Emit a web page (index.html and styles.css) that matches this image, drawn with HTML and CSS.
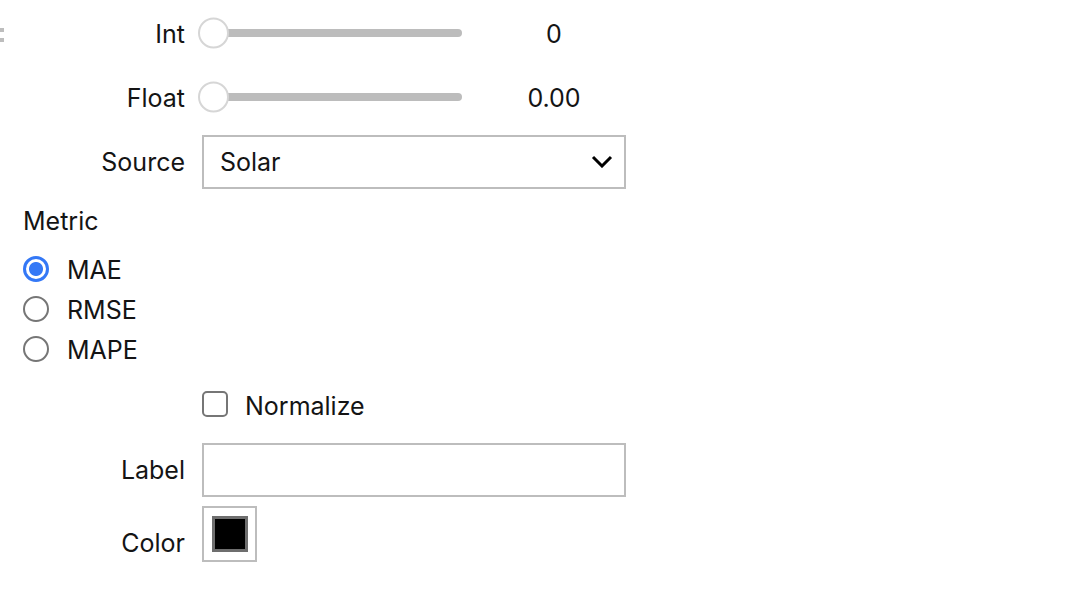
FILE: index.html
```html
<!DOCTYPE html>
<html>
<head>
<meta charset="utf-8">
<link rel="stylesheet" href="styles.css">
</head>
<body>
<div class="page">
  <div class="handle"><i></i><i></i></div>
  <div class="panel">
    <div class="row">
      <label class="lbl">Int</label>
      <div class="slider"><div class="track"><span class="thumb"></span></div></div>
      <div class="readout">0</div>
    </div>
    <div class="row">
      <label class="lbl">Float</label>
      <div class="slider"><div class="track"><span class="thumb"></span></div></div>
      <div class="readout">0.00</div>
    </div>
    <div class="row">
      <label class="lbl">Source</label>
      <div class="select">
        <span>Solar</span>
        <svg class="chev" width="22" height="14" viewBox="0 0 22 14"><polyline points="2,3 11,12 20,3" fill="none" stroke="#000" stroke-width="3"/></svg>
      </div>
    </div>
    <div class="metric">Metric</div>
    <div class="radios">
      <div class="radio"><span class="dot on"></span><span>MAE</span></div>
      <div class="radio"><span class="dot"></span><span>RMSE</span></div>
      <div class="radio"><span class="dot"></span><span>MAPE</span></div>
    </div>
    <div class="row check-row">
      <span class="spacer"></span>
      <span class="box"></span>
      <span>Normalize</span>
    </div>
    <div class="row">
      <label class="lbl">Label</label>
      <div class="text-input"></div>
    </div>
    <div class="row color-row">
      <label class="lbl">Color</label>
      <div class="swatch"><span></span></div>
    </div>
  </div>
</div>
</body>
</html>
```
FILE: styles.css
```css
body {
  margin: 0;
  background: #fff;
  font-family: Inter, "Noto Sans", sans-serif;
  font-size: 25px;
  color: #141414;
}
.page {
  display: flex;
}
.handle {
  width: 22px;
  padding-top: 28px;
  display: flex;
  flex-direction: column;
  gap: 6px;
}
.handle i {
  display: block;
  width: 4px;
  height: 4px;
  background: #bdbdbd;
}
.panel {
  padding-top: 7px;
}
.row {
  display: flex;
  align-items: center;
  height: 54px;
  margin-bottom: 10px;
}
.lbl {
  flex: none;
  width: 163px;
  padding-right: 17px;
  text-align: right;
}
.slider {
  width: 260px;
  height: 54px;
  display: flex;
  align-items: center;
}
.track {
  flex: 1;
  margin-left: 12px;
  margin-top: -2px;
  height: 8px;
  border-radius: 4px;
  background: #bcbcbc;
  position: relative;
}
.thumb {
  position: absolute;
  left: -16px;
  top: 50%;
  width: 31px;
  height: 31px;
  box-sizing: border-box;
  border: 2px solid #d6d6d6;
  border-radius: 50%;
  background: #fff;
  transform: translateY(-50%);
}
.readout {
  width: 184px;
  text-align: center;
}
.select {
  width: 424px;
  height: 54px;
  box-sizing: border-box;
  border: 2px solid #bdbdbd;
  display: flex;
  align-items: center;
  justify-content: space-between;
  padding: 0 11px 0 16px;
}
.chev {
  margin-top: -2px;
}
.metric {
  height: 44px;
  line-height: 44px;
  padding-left: 1px;
}
.radios {
  margin-top: 7px;
}
.radio {
  display: flex;
  align-items: center;
  height: 40px;
  padding-left: 1px;
}
.dot {
  width: 26px;
  height: 26px;
  box-sizing: border-box;
  border: 2px solid #767676;
  border-radius: 50%;
  margin-right: 18px;
  margin-top: -2px;
  background: #fff;
}
.dot.on {
  border: 3px solid #3478f6;
  background: radial-gradient(circle, #3478f6 0 6.5px, #fff 7.5px);
}
.check-row {
  margin-top: 8px;
  height: 55px;
}
.spacer {
  width: 180px;
}
.box {
  width: 26px;
  height: 26px;
  box-sizing: border-box;
  border: 2px solid #767676;
  border-radius: 5px;
  margin-right: 17px;
  margin-top: -4px;
}
.text-input {
  width: 424px;
  height: 54px;
  box-sizing: border-box;
  border: 2px solid #bdbdbd;
}
.color-row {
  height: 56px;
  margin-top: -1px;
  align-items: flex-end;
}
.color-row .lbl {
  padding-bottom: 4px;
}
.swatch {
  width: 55px;
  height: 56px;
  box-sizing: border-box;
  border: 2px solid #bdbdbd;
  padding: 8px;
}
.swatch span {
  display: block;
  width: 36px;
  height: 36px;
  box-sizing: border-box;
  border: 3px solid #6e6e6e;
  background: #000;
}
```
